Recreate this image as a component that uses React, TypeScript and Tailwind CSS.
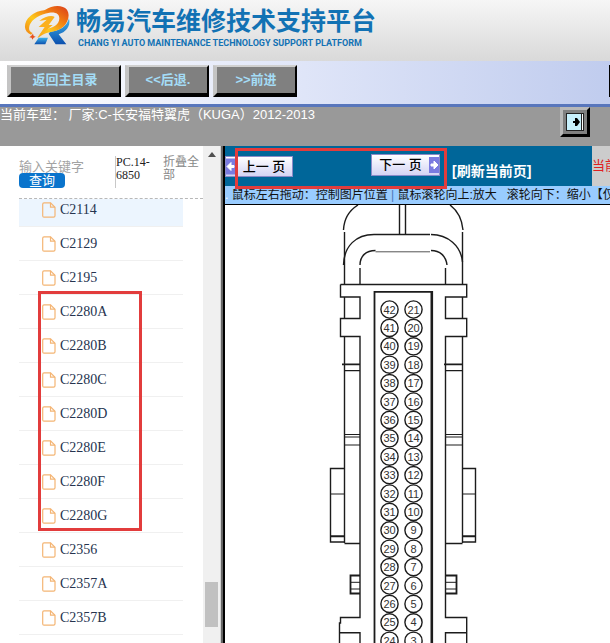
import React from "react";

type Pin = {
  label: number;
  x: number;
  y: number;
};

const connectors = [
  "C2114",
  "C2129",
  "C2195",
  "C2280A",
  "C2280B",
  "C2280C",
  "C2280D",
  "C2280E",
  "C2280F",
  "C2280G",
  "C2356",
  "C2357A",
  "C2357B",
];

// two columns of pins, numbered from the top down
const pins: Pin[] = Array.from({ length: 19 }, (_, i) => [
  { label: 42 - i, x: 389.5, y: 309.5 + i * 18.4 },
  { label: 21 - i, x: 413.5, y: 309.5 + i * 18.4 },
]).flat();

const Logo: React.FC = () => (
  <svg viewBox="0 0 168 144" className="h-12 w-14 shrink-0" aria-hidden="true">
    <defs>
      <linearGradient id="ring" x1="1" y1="0" x2="0" y2="1">
        <stop offset="0" stopColor="#d93a1a" />
        <stop offset="0.3" stopColor="#f07a12" />
        <stop offset="0.6" stopColor="#fdc81c" />
        <stop offset="1" stopColor="#ee7a14" />
      </linearGradient>
      <linearGradient id="leg" x1="0" y1="0" x2="0" y2="1">
        <stop offset="0" stopColor="#3fb3ea" />
        <stop offset="1" stopColor="#0b4fae" />
      </linearGradient>
    </defs>
    <path d="M90 86 C118 84 140 72 147 46 C153 72 136 88 116 94 L139 124 L107 124 L86 92 Z" fill="url(#leg)" />
    <path d="M56 104 L84 104 L76 124 L43 124 Z" fill="url(#leg)" />
    <path
      d="M33 95 C10 86 8 58 32 38 C52 22 66 24 76 20 C96 6 128 4 141 20 C154 40 140 72 112 82 C94 88 78 88 62 99 L52 106 L72 78 C100 78 118 64 118 46 C118 32 106 26 88 29 C60 33 36 48 29 66 C25 80 28 86 38 90 Z"
      fill="url(#ring)"
    />
    <path d="M58 54 C74 40 96 36 104 42 L86 66 L98 66 L52 104 L74 72 L56 72 L80 50 Z" fill="#fbb01c" />
    <path d="M39 92 L41 99 L47 101 L41 104 L37 110 L35 104 L28 103 L34 98 Z" fill="#e8501c" />
  </svg>
);

const PageIcon: React.FC = () => (
  <svg viewBox="0 0 14 16" className="h-4 w-3.5 shrink-0" fill="none" stroke="#f4b574" strokeWidth="1.2" aria-hidden="true">
    <path d="M2 0.8 H8.5 L13 5.2 V13.8 Q13 15.2 11.6 15.2 H2 Q0.7 15.2 0.7 13.8 V2.2 Q0.7 0.8 2 0.8 Z" />
    <path d="M8.5 0.8 V5.2 H13" />
  </svg>
);

const ArrowBlock: React.FC<{ left?: boolean; className: string }> = ({ left, className }) => (
  <svg viewBox="0 0 10 16" className={className} aria-hidden="true">
    <rect width="10" height="16" fill="#7b7be0" />
    <path d={left ? "M1 8 L5 4 V7 H8 V9 H5 V12 Z" : "M9 8 L5 4 V7 H2 V9 H5 V12 Z"} fill="#fff" stroke="#fff" />
  </svg>
);

const ToolButton: React.FC<{ className: string; children: React.ReactNode }> = ({ className, children }) => (
  <button
    type="button"
    className={`h-8 border-4 border-t-2 border-r-2 border-l-[#c4c4c4] border-t-[#d0d0d0] border-r-black border-b-black bg-[#808080] text-[13px] leading-5 font-bold text-[#a4dcf6] ${className}`}
  >
    {children}
  </button>
);

const Sidebar: React.FC = () => (
  <aside className="flex w-[220px] shrink-0">
    <div className="flex min-w-0 flex-1 flex-col bg-white">
      <div className="ml-[19px] flex h-[53px] shrink-0 items-start border-b border-dashed border-[#b8b8b8] pt-2.5">
        <form className="w-24 pt-1">
          <input
            type="text"
            aria-label="输入关键字"
            placeholder="输入关键字"
            className="block h-[13px] w-20 text-[13px] leading-[13px] outline-none placeholder:text-[#a3a3a3]"
          />
          <button type="button" className="block h-[15px] w-[46px] rounded-sm bg-[#0a74cc] text-[13px] leading-[15px] text-white">
            查询
          </button>
        </form>
        <a href="#model" className="block h-8 w-12 border-l border-[#c8c8c8] font-['Liberation_Serif',serif] text-xs leading-[13px] text-[#222]">
          PC.14-6850
        </a>
        <a href="#fold" className="block w-9 text-xs leading-[13px] text-[#888]">
          折叠全部
        </a>
      </div>
      <div className="min-h-0 flex-1 overflow-hidden">
        <ul className="relative -mt-1.5 pr-5 pl-[19px]">
          {connectors.map((name, i) => (
            <li key={name}>
              <a
                href={`#${name}`}
                className={`flex h-[34px] items-center gap-1 border-b border-[#f0f0f0] pl-[23px] font-['Liberation_Serif',serif] text-sm text-[#26344f] ${i === 0 ? "bg-[#ecf5fe]" : ""}`}
              >
                <PageIcon />
                {name}
              </a>
            </li>
          ))}
          <li aria-hidden="true" className="pointer-events-none absolute top-[98px] left-[38px] h-60 w-[104px] border-3 border-[#e23c3c]" />
        </ul>
      </div>
    </div>
    <div className="flex w-[17px] flex-col items-center bg-[#f0f0f0]">
      <div className="mt-1.5 h-0 w-0 border-x-4 border-b-5 border-x-transparent border-b-[#505050]" />
      <div className="flex-1" />
      <div className="mb-4 h-[45px] w-[13px] bg-[#c1c1c1]" />
    </div>
  </aside>
);

const ConnectorDrawing: React.FC = () => (
  <svg viewBox="225 205 385 438" className="h-[438px] w-[385px] shrink-0" fill="none" stroke="#1c1c1c" strokeWidth="1.4">
    {/* wire cover */}
    <path d="M399.5 205 V234 M405.5 205 V234" />
    <path d="M343.5 230 C344 219 350 210 358 205 M450 205 C458 211 462 219 463 230" />
    <path d="M344.5 232 V284 M462.5 232 V284" />
    <path d="M343.5 265 C344 246 356 234.5 374 234.5 H430 M431 234.5 C448 234.5 461 246 462.5 262" />
    <path d="M360 265 C360 256 366 250.5 375.5 250.5 M431 250.5 C440 250.5 446 256 447 265 M360 268 V284 M445.5 268 V284" />
    <path d="M375.5 251.8 H430" strokeWidth="1" stroke="#555" />
    {/* housing */}
    <path d="M340.5 284.5 H466.7 V297 H445.5 V318.5 H466.7 V336.5 H445.5 V617.5 H466.7 V643" />
    <path d="M340.5 284.5 V297 H360 V318.5 H340.5 V336.5 H360 V617.5 H340.5 V623 H339.5 V643" />
    <path d="M344.5 297 V318.5 M462.5 297 V318.5 M344.5 336.5 V543 M462.5 336.5 V543" />
    <path d="M342 364.3 H360 M444 364.3 H462.5" strokeWidth="1.8" />
    <path d="M344.5 370.6 H360 M445.5 370.6 H462.5 M344.5 434.5 H360 M445.5 434.5 H462.5 M344.5 437 H360 M445.5 437 H462.5 M344.5 445 H360 M445.5 445 H462.5" strokeWidth="1.1" />
    <path d="M344.5 468.5 H330.5 V542 H344.5 M462.5 468.5 H475.5 V542 H462.5 M344.5 543.5 H360 M445.5 543.5 H462.5" />
    <path d="M330.5 494 H344.5 M462.5 494 H475.5" strokeWidth="1.1" />
    <path d="M330.5 536.3 H344.5 M462.5 536.3 H475.5" strokeWidth="2" />
    <path d="M360 575.5 H350.5 V593.5 H360 M445.5 575.5 H456.5 V593.5 H445.5" strokeWidth="1.8" />
    <path d="M350.5 582.3 H360 M350.5 589 H360 M445.5 582.3 H456.5 M445.5 589 H456.5" strokeWidth="1" />
    <path d="M340 632.7 H360 V643 M466.7 632.7 H445.5 V643" />
    {/* pin block */}
    <path d="M374.5 643 V291.8 H432" strokeWidth="1.8" />
    <path d="M431.8 291 V643" strokeWidth="2.6" />
    {pins.map((pin) => (
      <g key={pin.label}>
        <circle cx={pin.x} cy={pin.y} r="8.6" strokeWidth="1.4" />
        <text x={pin.x} y={pin.y + 4} textAnchor="middle" fontSize="11" fill="#333" stroke="none">
          {pin.label}
        </text>
      </g>
    ))}
  </svg>
);

const Viewer: React.FC = () => (
  <main className="flex min-w-0 flex-1 flex-col overflow-hidden border-l-2 border-black bg-white">
    <div className="relative flex h-10 shrink-0 bg-[#006699] text-[13px] whitespace-nowrap">
      <button type="button" className="mt-2.5 flex h-[21px] w-[68px] shrink-0 items-center border border-[#8a8ac8] bg-linear-to-b from-white to-[#d4d4f4] text-black">
        <ArrowBlock left className="h-full w-2.5" />
        <span className="flex-1 font-medium">上一 页</span>
      </button>
      <button type="button" className="mt-2 ml-[78px] flex h-[22px] w-[69px] shrink-0 items-center border border-[#8a8ac8] bg-linear-to-b from-white to-[#d4d4f4] text-black">
        <span className="flex-1 font-medium">下一 页</span>
        <ArrowBlock className="h-4 w-2.5" />
      </button>
      <a href="#refresh" className="ml-3 pt-[15px] text-sm leading-5 font-bold text-white">
        [刷新当前页]
      </a>
      <div className="ml-auto w-[18px] shrink-0 overflow-hidden bg-[#cccccc] pt-2.5 leading-5 text-[#e02020]">当前</div>
      <div className="pointer-events-none absolute top-0.5 left-2.5 h-[41px] w-[212px] border-3 border-[#e23c3c]" />
    </div>
    <p className="h-[19px] shrink-0 overflow-hidden border-b border-black bg-[#99ccff] text-xs leading-[19px] whitespace-pre text-[#111]">
      <span className="text-white">. </span>鼠标左右拖动：控制图片位置 <span className="text-[#4a78b8]">|</span> 鼠标滚轮向上:放大   滚轮向下：缩小【仅
    </p>
    <ConnectorDrawing />
  </main>
);

export default function App() {
  return (
    <div className="flex h-screen flex-col overflow-hidden bg-white font-['Liberation_Sans','Noto_Sans_CJK_SC',sans-serif]">
      <header className="flex h-[61px] shrink-0 bg-linear-to-b from-[#f6f6f6] to-[#d9d9d9] pt-[3px] pl-5">
        <Logo />
        <div className="whitespace-nowrap text-[#1272b4]">
          <h1 className="h-[34px] text-[25px] leading-[37px] font-bold">畅易汽车维修技术支持平台</h1>
          <p className="pl-0.5 font-['Roboto',sans-serif] text-[9px] leading-3 font-bold">CHANG YI AUTO MAINTENANCE TECHNOLOGY SUPPORT PLATFORM</p>
        </div>
      </header>
      <nav className="flex h-[46px] shrink-0 items-start gap-1 border-b-3 border-[#5876bc] bg-linear-to-r from-white via-[#dfe5f8] to-[#c0ccee] pt-1 pl-[7px]">
        <ToolButton className="w-[114px]">返回主目录</ToolButton>
        <ToolButton className="w-[84px]">&lt;&lt;后退.</ToolButton>
        <ToolButton className="w-[84px]">&gt;&gt;前进</ToolButton>
        <div className="ml-auto h-8 w-px bg-black" />
      </nav>
      <div className="flex h-[39px] shrink-0 items-start justify-between bg-[#999999] pr-5">
        <p className="text-[13px] leading-4 text-white">当前车型： 厂家:C-长安福特翼虎（KUGA）2012-2013</p>
        <button
          type="button"
          aria-label="展开"
          className="flex h-[30px] w-[30px] items-center justify-center border-3 border-t-[#b8b8b8] border-r-black border-b-black border-l-[#b8b8b8] bg-[#808080]"
        >
          <svg viewBox="0 0 18 18" className="h-[18px] w-[18px]">
            <rect x="0.5" y="0.5" width="17" height="17" fill="#c8f0fc" stroke="#222" />
            <path d="M15.5 1 V17" stroke="#222" />
            <path d="M16.5 1 V17" stroke="#fff" />
            <path d="M7 8 H9 V5 H11 L14 9 L11 13 H9 V10 H7 Z" fill="#000" />
          </svg>
        </button>
      </div>
      <div className="flex min-h-0 flex-1">
        <Sidebar />
        <div className="w-[3px] shrink-0 border-l border-[#d0d0d0] bg-[#666]" />
        <Viewer />
      </div>
    </div>
  );
}
